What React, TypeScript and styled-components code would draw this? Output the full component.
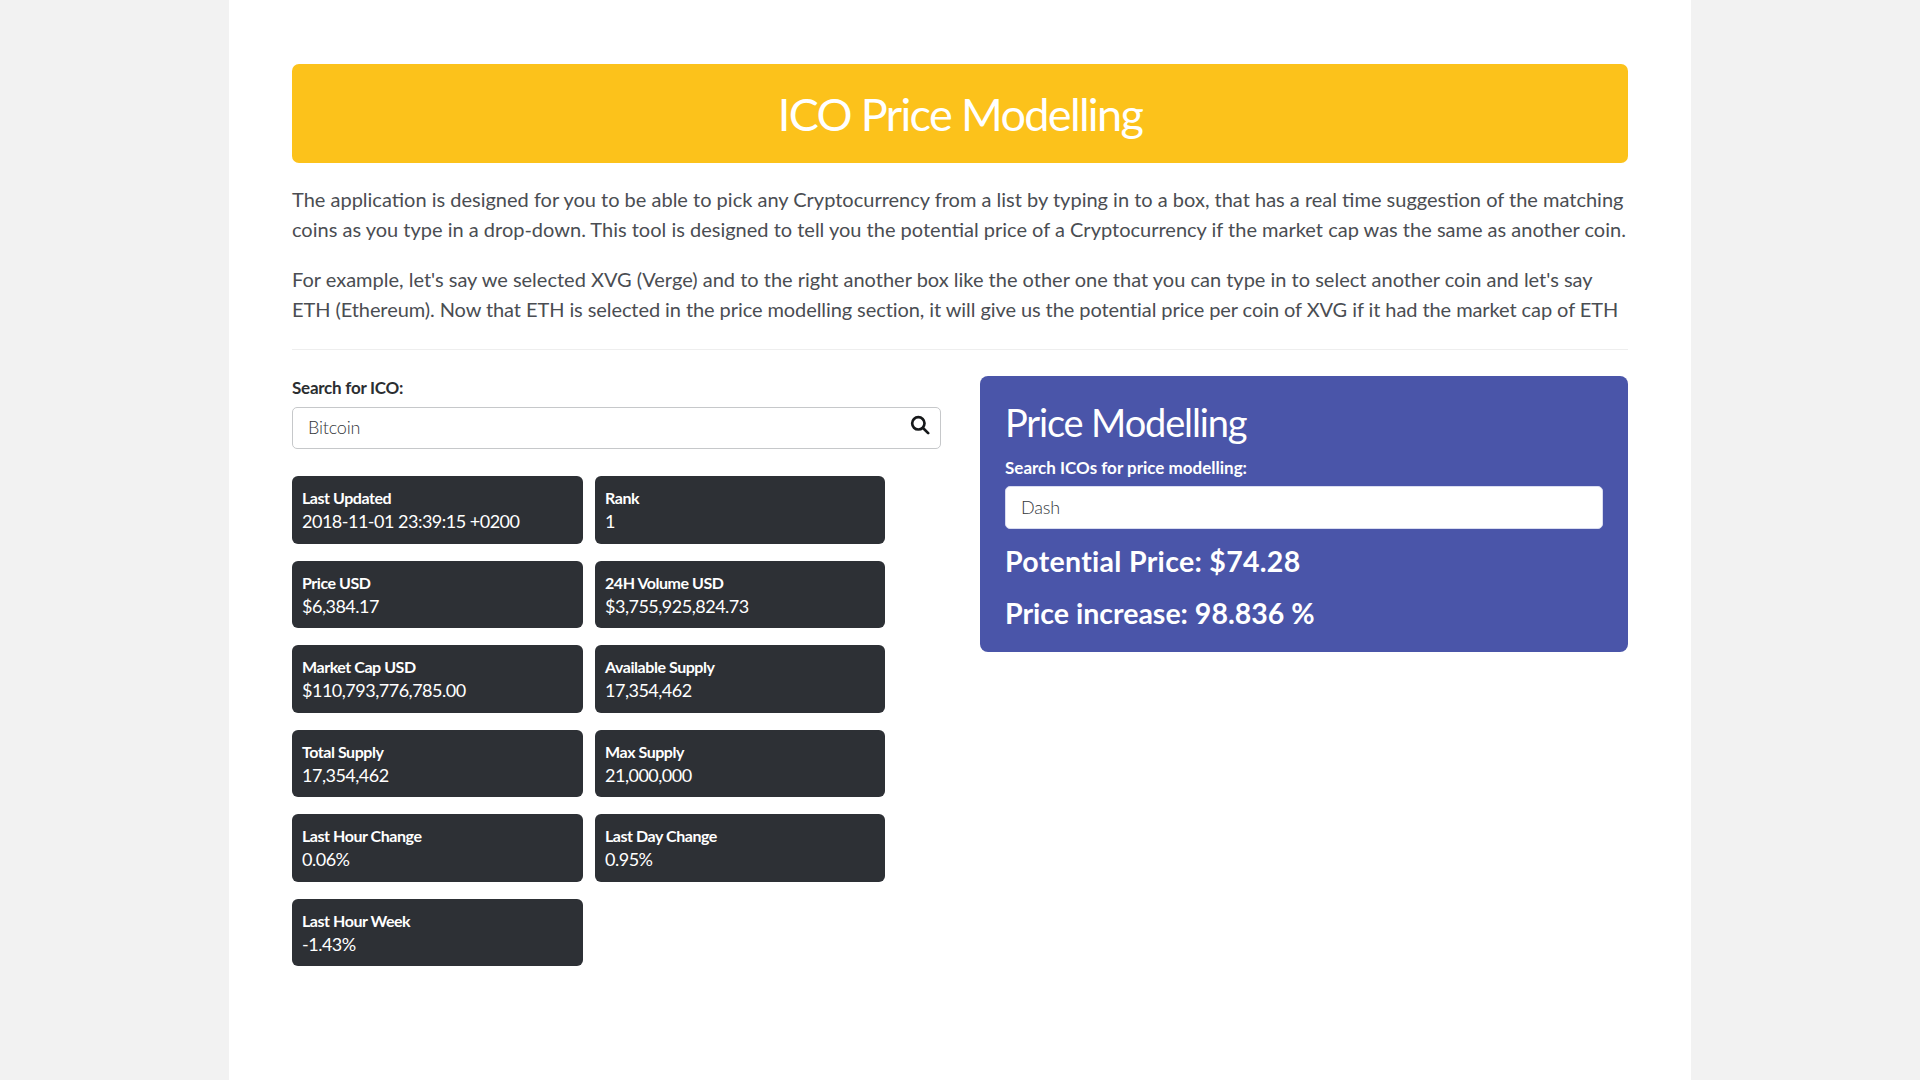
import styled, { createGlobalStyle } from "styled-components";

const stats = [
  { label: "Last Updated", value: "2018-11-01 23:39:15 +0200" },
  { label: "Rank", value: "1" },
  { label: "Price USD", value: "$6,384.17" },
  { label: "24H Volume USD", value: "$3,755,925,824.73" },
  { label: "Market Cap USD", value: "$110,793,776,785.00" },
  { label: "Available Supply", value: "17,354,462" },
  { label: "Total Supply", value: "17,354,462" },
  { label: "Max Supply", value: "21,000,000" },
  { label: "Last Hour Change", value: "0.06%" },
  { label: "Last Day Change", value: "0.95%" },
  { label: "Last Hour Week", value: "-1.43%" },
];

const GlobalStyle = createGlobalStyle`
  html, body {
    margin: 0;
    background-color: #f2f2f2;
  }
  body {
    font-family: "Lato", "Open Sans", sans-serif;
    color: #2b2e31;
  }
`;

const Page = styled.div`
  width: 1462px;
  min-height: 1080px;
  margin-left: 229px;
  padding: 64px 63px 0;
  box-sizing: border-box;
  background-color: #fff;
`;

const Banner = styled.div`
  height: 99px;
  background-color: #fcc21b;
  border-radius: 7px;
  display: flex;
  align-items: center;
  justify-content: center;
`;

const Title = styled.h1`
  margin: 0;
  font-size: 45px;
  font-weight: 400;
  letter-spacing: -1.65px;
  color: #fff;
`;

const Intro = styled.p<{ $first?: boolean }>`
  margin: ${(p) => (p.$first ? "21px" : "20px")} 0 0;
  font-size: 20px;
  font-weight: 400;
  line-height: 30px;
  white-space: nowrap;
  color: #4a4d52;
`;

const IntroLine = styled.span<{ $tracking: number }>`
  display: block;
  letter-spacing: ${(p) => p.$tracking}px;
`;

const Rule = styled.hr`
  margin: 25px 0 0;
  border: 0;
  border-top: 1px solid #eee;
`;

const Columns = styled.div`
  display: flex;
  margin-top: 26px;
`;

const LeftColumn = styled.div`
  width: 649px;
  margin-right: 39px;
  padding-top: 1px;
`;

const SearchLabel = styled.label`
  display: block;
  font-size: 17px;
  font-weight: 700;
  letter-spacing: -0.25px;
  line-height: 21px;
  margin-bottom: 9px;
`;

const SearchBox = styled.div`
  position: relative;
`;

const SearchInput = styled.input`
  display: block;
  width: 100%;
  height: 42px;
  box-sizing: border-box;
  padding: 0 15px 2px;
  border: 1px solid #c6c8ca;
  border-radius: 5px;
  font-family: inherit;
  font-size: 18px;
  font-weight: 300;
  letter-spacing: -0.2px;
  color: #33363a;
`;

const SearchIcon = styled.svg`
  position: absolute;
  top: 8px;
  right: 11px;
  width: 20px;
  height: 20px;
`;

const StatGrid = styled.div`
  display: grid;
  grid-template-columns: 291px 290px;
  column-gap: 12px;
  row-gap: 17px;
  margin-top: 27px;
`;

const StatCard = styled.div`
  height: 67.5px;
  box-sizing: border-box;
  padding: 10px 10px 0;
  background-color: #2d3035;
  border-radius: 6px;
  color: #fff;
`;

const StatLabel = styled.div`
  font-size: 16px;
  font-weight: 700;
  letter-spacing: -0.45px;
  line-height: 23px;
`;

const StatValue = styled.div`
  font-size: 18px;
  font-weight: 400;
  letter-spacing: -0.5px;
  line-height: 24px;
`;

const ModelPanel = styled.div`
  width: 648px;
  height: 276px;
  box-sizing: border-box;
  padding: 23px 25px 0;
  background-color: #4a55a9;
  border-radius: 8px;
  color: #fff;
`;

const PanelTitle = styled.h2`
  margin: 0;
  font-size: 38px;
  font-weight: 400;
  letter-spacing: -1.15px;
  line-height: 46px;
`;

const PanelLabel = styled.label`
  display: block;
  margin-top: 12px;
  font-size: 17px;
  font-weight: 700;
  line-height: 21px;
`;

const PanelInput = styled(SearchInput)`
  height: 43px;
  margin-top: 8px;
  border-color: #d9dcf0;
`;

const Result = styled.h3<{ $tracking: number }>`
  margin: 13px 0 0;
  font-size: 28.5px;
  font-weight: 700;
  letter-spacing: ${(p) => p.$tracking}px;
  line-height: 38px;
  &:last-child {
    margin-top: 14px;
  }
`;

export default function App() {
  return (
    <>
      <GlobalStyle />
      <Page>
        <Banner>
          <Title>ICO Price Modelling</Title>
        </Banner>
        <Intro $first>
          <IntroLine $tracking={0}>
            The application is designed for you to be able to pick any Cryptocurrency from a list by typing in to a box, that has a real time suggestion of the matching
          </IntroLine>
          <IntroLine $tracking={0}>
            coins as you type in a drop-down. This tool is designed to tell you the potential price of a Cryptocurrency if the market cap was the same as another coin.
          </IntroLine>
        </Intro>
        <Intro>
          <IntroLine $tracking={0}>
            For example, let's say we selected XVG (Verge) and to the right another box like the other one that you can type in to select another coin and let's say
          </IntroLine>
          <IntroLine $tracking={-0.08}>
            ETH (Ethereum). Now that ETH is selected in the price modelling section, it will give us the potential price per coin of XVG if it had the market cap of ETH
          </IntroLine>
        </Intro>
        <Rule />
        <Columns>
          <LeftColumn>
            <SearchLabel>Search for ICO:</SearchLabel>
            <SearchBox>
              <SearchInput defaultValue="Bitcoin" />
              <SearchIcon viewBox="0 0 24 24" fill="none" stroke="#16181a" strokeWidth="3.2" strokeLinecap="round">
                <circle cx="10" cy="10" r="7.4" />
                <path d="M15.6 15.6 L21.8 21.8" />
              </SearchIcon>
            </SearchBox>
            <StatGrid>
              {stats.map((stat) => (
                <StatCard key={stat.label}>
                  <StatLabel>{stat.label}</StatLabel>
                  <StatValue>{stat.value}</StatValue>
                </StatCard>
              ))}
            </StatGrid>
          </LeftColumn>
          <ModelPanel>
            <PanelTitle>Price Modelling</PanelTitle>
            <PanelLabel>Search ICOs for price modelling:</PanelLabel>
            <PanelInput defaultValue="Dash" />
            <Result $tracking={0.3}>Potential Price: $74.28</Result>
            <Result $tracking={0}>Price increase: 98.836 %</Result>
          </ModelPanel>
        </Columns>
      </Page>
    </>
  );
}
